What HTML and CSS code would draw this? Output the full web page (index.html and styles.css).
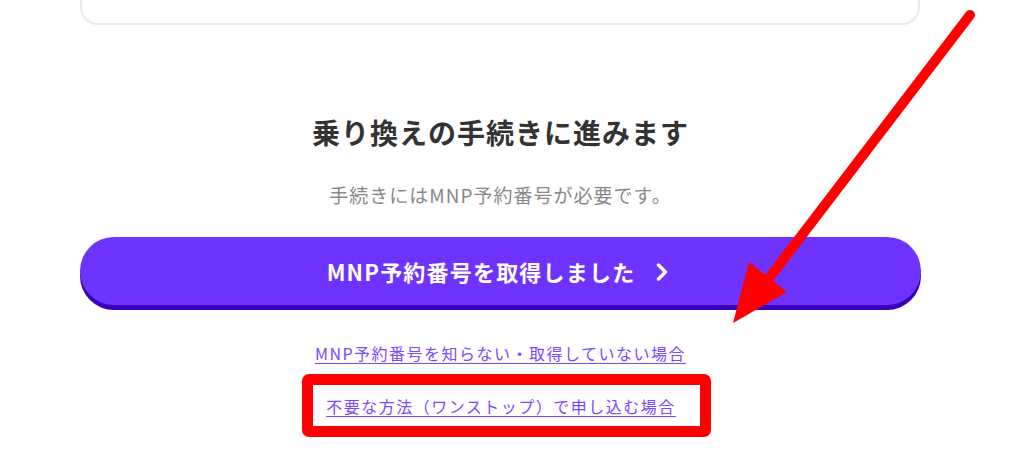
FILE: index.html
```html
<!DOCTYPE html>
<html lang="ja">
<head>
<meta charset="utf-8">
<link rel="stylesheet" href="styles.css">
</head>
<body>
<div class="page">
  <div class="card"></div>
  <section class="proceed">
    <h2 class="title">乗り換えの手続きに進みます</h2>
    <p class="note">手続きにはMNP予約番号が必要です。</p>
    <a class="primary-btn" href="#">
      <span class="btn-label">MNP予約番号を取得しました</span>
      <svg class="chev" width="12" height="18" viewBox="0 0 12 18"><polyline points="2.5,2 9.5,9 2.5,16" fill="none" stroke="#fff" stroke-width="3.4" stroke-linecap="round" stroke-linejoin="round"/></svg>
    </a>
    <a class="text-link link-first" href="#">MNP予約番号を知らない・取得していない場合</a>
    <div class="highlight">
      <a class="text-link" href="#">不要な方法（ワンストップ）で申し込む場合</a>
    </div>
  </section>
  <svg class="annot-arrow" width="1024" height="472" viewBox="0 0 1024 472">
    <line x1="970" y1="55" x2="760" y2="330" stroke="#ff0000" stroke-width="10" stroke-linecap="round"/>
    <polygon points="733,363 749,302 787,332" fill="#ff0000"/>
  </svg>
</div>
</body>
</html>
```

FILE: styles.css
```css
html, body {
  margin: 0;
  padding: 0;
  background: #fff;
}
body {
  font-family: "Noto Sans CJK JP", "Noto Sans", sans-serif;
  width: 1024px;
  height: 472px;
  overflow: hidden;
}
.page {
  position: relative;
  width: 1024px;
  height: 472px;
}
.card {
  margin: -40px 0 0 80px;
  width: 836px;
  height: 61px;
  border: 2.5px solid #e8ebef;
  border-radius: 18px;
  background: #fff;
}
.proceed {
  width: 841px;
  margin: 0 0 0 80px;
  display: flex;
  flex-direction: column;
  align-items: center;
}
.title {
  margin: 87px 0 0;
  font-size: 28px;
  line-height: 40px;
  font-weight: 700;
  letter-spacing: 1px;
  color: #333;
}
.note {
  margin: 30px 0 0;
  font-size: 19px;
  line-height: 26px;
  letter-spacing: 1px;
  color: #888;
}
.primary-btn {
  margin-top: 29px;
  width: 841px;
  height: 68px;
  border-radius: 34px;
  background: #6e33ff;
  box-shadow: 0 5px 0 #3a00b8;
  display: flex;
  align-items: center;
  justify-content: center;
  gap: 21px;
  padding-right: 6px;
  text-decoration: none;
  color: #fff;
  box-sizing: border-box;
}
.btn-label {
  font-size: 22px;
  font-weight: 700;
  letter-spacing: 1.2px;
  line-height: 30px;
}
.chev {
  margin-top: 2px;
}
.text-link {
  font-size: 16px;
  line-height: 24px;
  letter-spacing: 1.5px;
  color: #7b48ff;
  text-decoration: underline;
  text-underline-offset: 3px;
}
.link-first {
  margin-top: 36px;
}
.highlight {
  margin: 9px 0 0 11px;
  border: 11px solid #ff0000;
  border-radius: 7px;
  width: 377px;
  height: 41px;
  padding-right: 10px;
  box-sizing: content-box;
  display: flex;
  align-items: center;
  justify-content: center;
}
.annot-arrow {
  position: absolute;
  left: 0;
  top: 0;
  pointer-events: none;
}
```
